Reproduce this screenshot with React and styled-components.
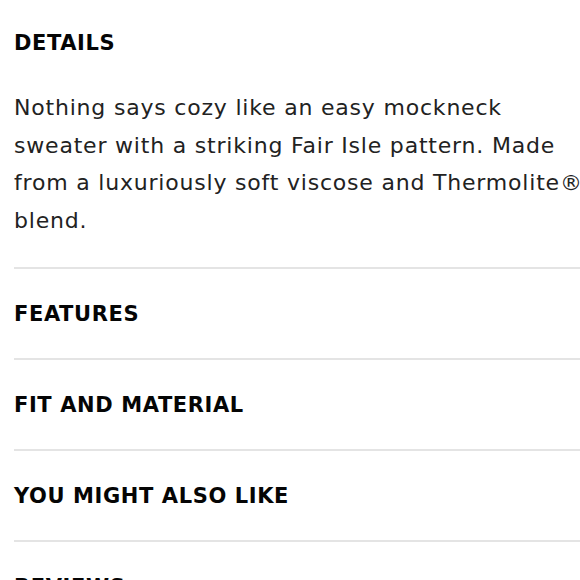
import React from "react";
import styled, { createGlobalStyle } from "styled-components";

const GlobalStyle = createGlobalStyle`
  html, body {
    margin: 0;
    padding: 0;
    background: #ffffff;
    overflow: hidden;
  }
`;

const Page = styled.div`
  width: 620px;
  padding: 28px 0 0 14px;
  font-family: "DejaVu Sans", "Open Sans", sans-serif;
  color: #1a1a1a;
`;

const Heading = styled.h2`
  margin: 0;
  font-size: 21px;
  line-height: 30px;
  font-weight: 700;
  letter-spacing: 0.6px;
  color: #050505;
  text-transform: uppercase;
`;

const Details = styled.section`
  padding-bottom: 28px;
  border-bottom: 2px solid #e4e4e4;
`;

const Body = styled.p`
  margin: 31px 0 0;
  width: 586px;
  font-size: 22px;
  line-height: 37.5px;
  letter-spacing: 0.8px;
  color: #222222;
`;

const Row = styled.div`
  display: flex;
  align-items: center;
  height: 89px;
  border-bottom: 2px solid #e4e4e4;
`;

const sections = ["Features", "Fit and Material", "You Might Also Like", "Reviews"];

export default function App() {
  return (
    <>
      <GlobalStyle />
      <Page>
        <Details>
          <Heading>Details</Heading>
          <Body>
            Nothing says cozy like an easy mockneck sweater with a striking
            Fair Isle pattern. Made from a luxuriously soft viscose and
            Thermolite® blend.
          </Body>
        </Details>
        {sections.map((s) => (
          <Row key={s}>
            <Heading>{s}</Heading>
          </Row>
        ))}
      </Page>
    </>
  );
}
